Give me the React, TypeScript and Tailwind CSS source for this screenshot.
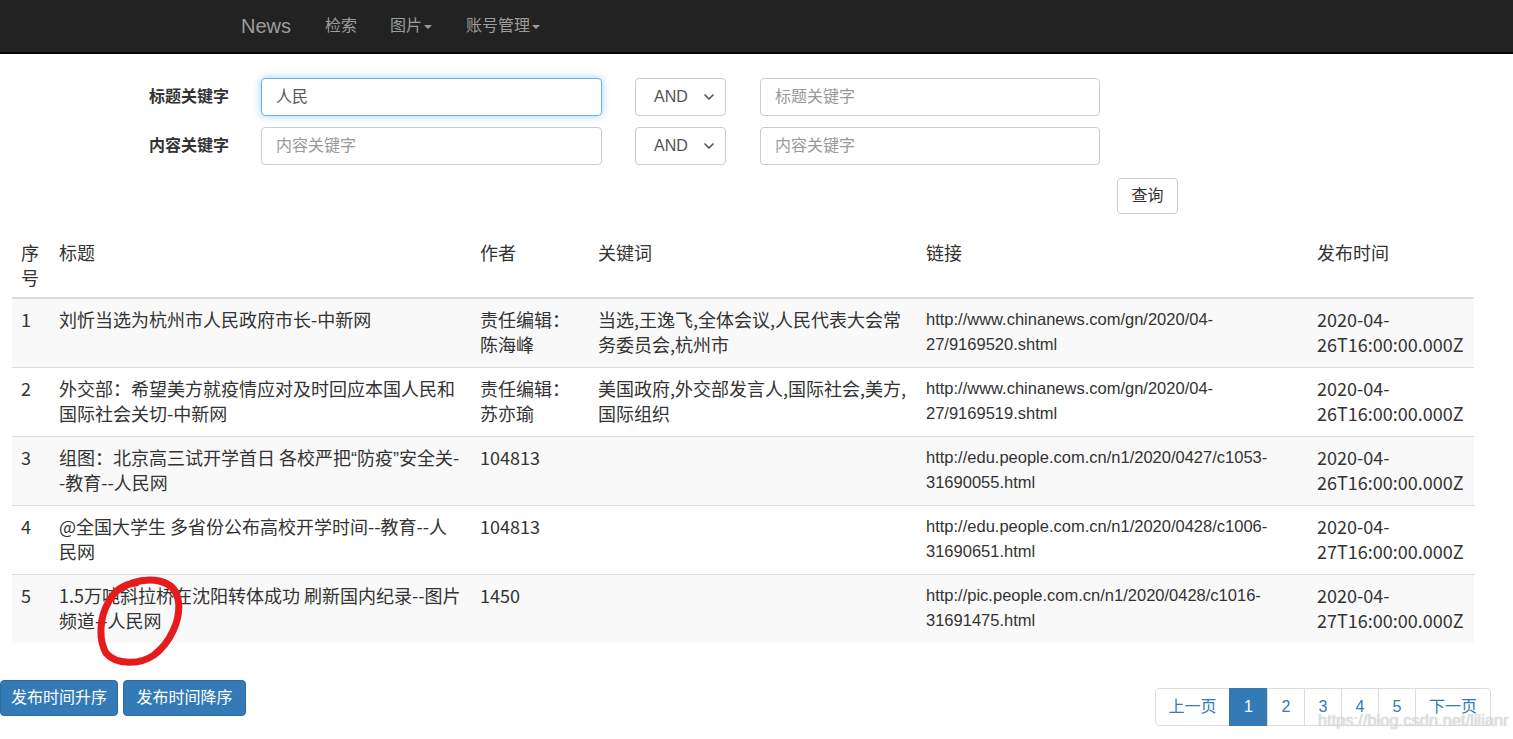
import { ChevronDown } from "lucide-react";

const font = { fontFamily: '"Liberation Sans", "Noto Sans CJK SC", sans-serif' };
const tableFont = { fontFamily: '"Noto Sans CJK SC", "Liberation Sans", sans-serif' };
const latin = { fontFamily: '"Liberation Sans", sans-serif' };

const rows = [
  {
    id: 1,
    title: <>刘忻当选为杭州市人民政府市长-中新网</>,
    author: "责任编辑：陈海峰",
    keywords: "当选,王逸飞,全体会议,人民代表大会常务委员会,杭州市",
    link: "http://www.chinanews.com/gn/2020/04-27/9169520.shtml",
    time: "2020-04-26T16:00:00.000Z",
  },
  {
    id: 2,
    title: <>外交部：希望美方就疫情应对及时回应本国人民和国际社会关切-中新网</>,
    author: "责任编辑：苏亦瑜",
    keywords: "美国政府,外交部发言人,国际社会,美方,国际组织",
    link: "http://www.chinanews.com/gn/2020/04-27/9169519.shtml",
    time: "2020-04-26T16:00:00.000Z",
  },
  {
    id: 3,
    title: (
      <>
        组图：北京高三试开学首日 各校严把<span className="leading-none" style={latin}>“</span>防疫<span className="leading-none" style={latin}>”</span>安全关--教育--人民网
      </>
    ),
    author: "104813",
    keywords: "",
    link: "http://edu.people.com.cn/n1/2020/0427/c1053-31690055.html",
    time: "2020-04-26T16:00:00.000Z",
  },
  {
    id: 4,
    title: <>@全国大学生 多省份公布高校开学时间--教育--人民网</>,
    author: "104813",
    keywords: "",
    link: "http://edu.people.com.cn/n1/2020/0428/c1006-31690651.html",
    time: "2020-04-27T16:00:00.000Z",
  },
  {
    id: 5,
    title: <>1.5万吨斜拉桥在沈阳转体成功 刷新国内纪录--图片频道--人民网</>,
    author: "1450",
    keywords: "",
    link: "http://pic.people.com.cn/n1/2020/0428/c1016-31691475.html",
    time: "2020-04-27T16:00:00.000Z",
  },
];

const Caret = () => (
  <span className="ml-[2px] inline-block h-0 w-0 border-x-[4px] border-t-[4px] border-x-transparent border-t-[#9d9d9d] align-middle" />
);

const SelectBox = () => (
  <div className="flex h-[38px] w-[91px] items-center justify-between rounded-[4px] border border-[#ccc] bg-white pl-[18px] pr-[8px] text-[16px] text-[#555]">
    <span>AND</span>
    <ChevronDown className="h-[16px] w-[16px] text-[#555]" strokeWidth={2.5} />
  </div>
);

export default function App() {
  return (
    <div className="relative min-h-[739px] bg-white text-[#333]" style={font}>
      {/* navbar */}
      <nav className="flex h-[54px] items-center border-b-2 border-[#080808] bg-[#222] pl-[241px]">
        <span className="mr-[34px] text-[20px] text-[#9d9d9d]">News</span>
        <span className="mr-[33px] text-[16px] text-[#9d9d9d]">检索</span>
        <span className="mr-[34px] text-[16px] text-[#9d9d9d]">
          图片
          <Caret />
        </span>
        <span className="text-[16px] text-[#9d9d9d]">
          账号管理
          <Caret />
        </span>
      </nav>

      {/* search form */}
      <div className="pt-[24px]">
        <div className="flex flex-col gap-[11px]">
          <div className="flex items-center">
            <label className="w-[261px] pl-[149px] text-[16px] font-bold">标题关键字</label>
            <div className="flex h-[38px] w-[341px] items-center rounded-[4px] border border-[#66afe9] px-[14px] text-[16px] text-[#555] shadow-[0_0_8px_rgba(102,175,233,0.6)]">
              人民
            </div>
            <div className="ml-[33px]">
              <SelectBox />
            </div>
            <div className="ml-[34px] flex h-[38px] w-[340px] items-center rounded-[4px] border border-[#ccc] px-[14px] text-[16px] text-[#999]">
              标题关键字
            </div>
          </div>
          <div className="flex items-center">
            <label className="w-[261px] pl-[149px] text-[16px] font-bold">内容关键字</label>
            <div className="flex h-[38px] w-[341px] items-center rounded-[4px] border border-[#ccc] px-[14px] text-[16px] text-[#999]">
              内容关键字
            </div>
            <div className="ml-[33px]">
              <SelectBox />
            </div>
            <div className="ml-[34px] flex h-[38px] w-[340px] items-center rounded-[4px] border border-[#ccc] px-[14px] text-[16px] text-[#999]">
              内容关键字
            </div>
          </div>
        </div>
        <div className="mt-[13px] flex pl-[1117px]">
          <button className="h-[36px] w-[61px] rounded-[4px] border border-[#ccc] bg-white text-[16px] text-[#333]">
            查询
          </button>
        </div>
      </div>

      {/* table */}
      <div className="mt-[18px] pl-[12px]" style={tableFont}>
        <table className="w-[1462px] table-fixed border-collapse text-[18px] leading-[25px]">
          <colgroup>
            <col className="w-[39px]" />
            <col className="w-[421px]" />
            <col className="w-[118px]" />
            <col className="w-[328px]" />
            <col className="w-[391px]" />
            <col className="w-[165px]" />
          </colgroup>
          <thead>
            <tr className="border-b-2 border-[#ddd] text-left align-top">
              <th className="pb-[7px] pl-[9px] pr-[8px] pt-[8px] font-normal">序号</th>
              <th className="pb-[7px] px-[8px] pt-[8px] font-normal">标题</th>
              <th className="pb-[7px] px-[8px] pt-[8px] font-normal">作者</th>
              <th className="pb-[7px] px-[8px] pt-[8px] font-normal">关键词</th>
              <th className="pb-[7px] px-[8px] pt-[8px] font-normal">链接</th>
              <th className="pb-[7px] px-[8px] pt-[8px] font-normal">发布时间</th>
            </tr>
          </thead>
          <tbody>
            {rows.map((r, i) => (
              <tr
                key={r.id}
                className={`border-t border-[#ddd] align-top ${i % 2 === 0 ? "bg-[#f9f9f9]" : "bg-white"}`}
              >
                <td className="pb-[10px] pl-[9px] pr-[8px] pt-[8px]">{r.id}</td>
                <td className="pb-[10px] px-[8px] pt-[8px]">{r.title}</td>
                <td className="pb-[10px] px-[8px] pt-[8px]">{r.author}</td>
                <td className="pb-[10px] px-[8px] pt-[8px]">{r.keywords}</td>
                <td className="break-words pb-[10px] px-[8px] pt-[8px] text-[16.5px]" style={latin}>
                  {r.link}
                </td>
                <td className="break-words pb-[10px] px-[8px] pt-[8px]">{r.time}</td>
              </tr>
            ))}
          </tbody>
        </table>
      </div>

      {/* sort buttons + pagination */}
      <div className="mt-[37px] flex items-start justify-between pr-[22px]">
        <div className="flex gap-[5px]">
          <button className="h-[36px] w-[118px] rounded-[4px] border border-[#2e6da4] bg-[#337ab7] text-[16px] text-white">
            发布时间升序
          </button>
          <button className="h-[36px] w-[123px] rounded-[4px] border border-[#2e6da4] bg-[#337ab7] text-[16px] text-white">
            发布时间降序
          </button>
        </div>
        <div className="mt-[8px] flex h-[38px] text-[16px] text-[#337ab7]">
          <span className="flex w-[75px] items-center justify-center rounded-l-[4px] border border-[#ddd] bg-white">上一页</span>
          <span className="-ml-px flex w-[39px] items-center justify-center border border-[#337ab7] bg-[#337ab7] text-white">1</span>
          <span className="-ml-px flex w-[38px] items-center justify-center border border-[#ddd] bg-white">2</span>
          <span className="-ml-px flex w-[38px] items-center justify-center border border-[#ddd] bg-white">3</span>
          <span className="-ml-px flex w-[38px] items-center justify-center border border-[#ddd] bg-white">4</span>
          <span className="-ml-px flex w-[38px] items-center justify-center border border-[#ddd] bg-white">5</span>
          <span className="-ml-px flex w-[76px] items-center justify-center rounded-r-[4px] border border-[#ddd] bg-white">下一页</span>
        </div>
      </div>

      {/* hand-drawn annotation */}
      <svg className="pointer-events-none absolute left-[90px] top-[575px]" width="100" height="95" viewBox="0 0 100 95">
        <path
          d="M42 8 C60 2 84 4 88 24 C92 44 80 68 64 80 C50 90 26 90 16 78 C8 64 10 42 18 28 C24 16 34 9 46 8"
          fill="none"
          stroke="#e61c1c"
          strokeWidth="7"
          strokeLinecap="round"
        />
      </svg>

      {/* watermark */}
      <span className="pointer-events-none absolute left-[1318px] top-[708px] text-[16.5px] text-white/70 [text-shadow:0_0_1px_#999]">
        https://blog.csdn.net/lilianr
      </span>
    </div>
  );
}
